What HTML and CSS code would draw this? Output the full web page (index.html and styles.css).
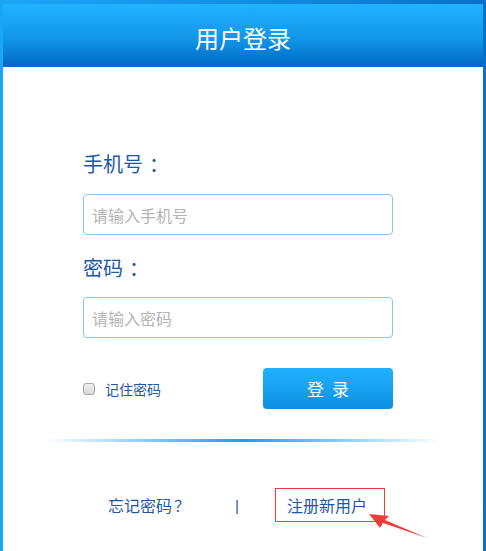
FILE: index.html
```html
<!DOCTYPE html>
<html lang="zh-CN">
<head>
<meta charset="utf-8">
<title>用户登录</title>
<link rel="stylesheet" href="styles.css">
</head>
<body>
<div class="card">
  <div class="header">用户登录</div>
  <form class="form">
    <div class="label">手机号<span class="colon">：</span></div>
    <div class="field"><input class="input" type="text" placeholder="请输入手机号"></div>
    <div class="label label-pw">密码<span class="colon">：</span></div>
    <div class="field"><input class="input" type="password" placeholder="请输入密码"></div>
    <div class="actions">
      <label class="remember"><input class="check" type="checkbox"><span>记住密码</span></label>
      <button class="btn" type="button">登录</button>
    </div>
  </form>
  <div class="divider"></div>
  <div class="links">
    <a class="link forgot">忘记密码<span class="qmark">？</span></a>
    <span class="sep">|</span>
    <span class="reg-wrap">
      <a class="link reg">注册新用户</a>
      <svg class="arrow" width="70" height="40" viewBox="0 0 70 40">
        <polygon points="2,2 22,4 18,8 60,26 16,11 13,16" fill="#f03c3c"/>
      </svg>
    </span>
  </div>
</div>
</body>
</html>
```
FILE: styles.css
```css
html, body {
  margin: 0;
  padding: 0;
  height: 100%;
  overflow: hidden;
}
body {
  background: linear-gradient(90deg, #1aa6f6 0%, #138ee4 50%, #0a6fc8 100%);
  padding: 4px 3px 0 3px;
  box-sizing: border-box;
  font-family: "Noto Sans CJK SC", "Noto Sans", sans-serif;
}
.card {
  background: #fff;
  height: calc(100vh - 4px);
}
.header {
  height: 63px;
  box-sizing: border-box;
  padding-top: 5px;
  line-height: 58px;
  text-align: center;
  color: #fff;
  font-size: 24px;
  background: linear-gradient(180deg, #22b3ff 0%, #1196e8 55%, #0067c2 100%);
}
.form {
  padding: 85px 0 0 80px;
  margin: 0;
}
.label {
  font-size: 20px;
  line-height: 24px;
  color: #1d58a6;
  margin-bottom: 18px;
}
.colon {
  margin-left: 6px;
}
.qmark {
  margin-left: 2px;
}
.label-pw {
  margin-top: 21px;
  margin-bottom: 17px;
}
.field {
  width: 310px;
}
.input {
  display: block;
  width: 310px;
  height: 41px;
  box-sizing: border-box;
  border: 1px solid #84c6f4;
  border-radius: 4px;
  padding: 0 8px;
  font-family: "Noto Sans CJK SC", sans-serif;
  font-size: 16px;
  color: #333;
  outline: none;
}
.input::placeholder {
  color: #b4b4b4;
}
.actions {
  width: 310px;
  margin-top: 30px;
  display: flex;
  align-items: center;
  justify-content: space-between;
}
.remember {
  display: flex;
  align-items: center;
  font-size: 14px;
  color: #1d58a6;
}
.check {
  appearance: none;
  -webkit-appearance: none;
  width: 12px;
  height: 12px;
  margin: 0 10px 0 0;
  border: 1px solid #a8a8a8;
  border-radius: 3px;
  background: linear-gradient(180deg, #eeeeee, #d8d8d8);
}
.btn {
  width: 130px;
  height: 41px;
  border: none;
  border-radius: 4px;
  background: linear-gradient(180deg, #21b2ff 0%, #0e8fe2 100%);
  color: #fff;
  font-family: "Noto Sans CJK SC", sans-serif;
  font-size: 17px;
  letter-spacing: 8px;
  padding: 0 0 0 8px;
}
.divider {
  margin: 30px auto 0;
  width: 396px;
  height: 3px;
  background: linear-gradient(90deg, rgba(200,230,255,0) 0%, #8cccff 25%, #1a9cff 50%, #8cccff 75%, rgba(200,230,255,0) 100%);
}
.links {
  display: flex;
  align-items: center;
  padding-left: 105px;
  margin-top: 46px;
  font-size: 16px;
  color: #1d58a6;
}
.link {
  color: #1d58a6;
}
.sep {
  margin-left: 45px;
  font-size: 15px;
  font-family: "Liberation Sans", sans-serif;
  color: #1d58a6;
}
.reg-wrap {
  position: relative;
  margin-left: 36px;
}
.reg {
  display: block;
  border: 1px solid #f03c3c;
  height: 34px;
  line-height: 32px;
  box-sizing: border-box;
  padding: 0 11px;
  width: 110px;
}
.arrow {
  position: absolute;
  left: 92px;
  top: 24px;
}
```
